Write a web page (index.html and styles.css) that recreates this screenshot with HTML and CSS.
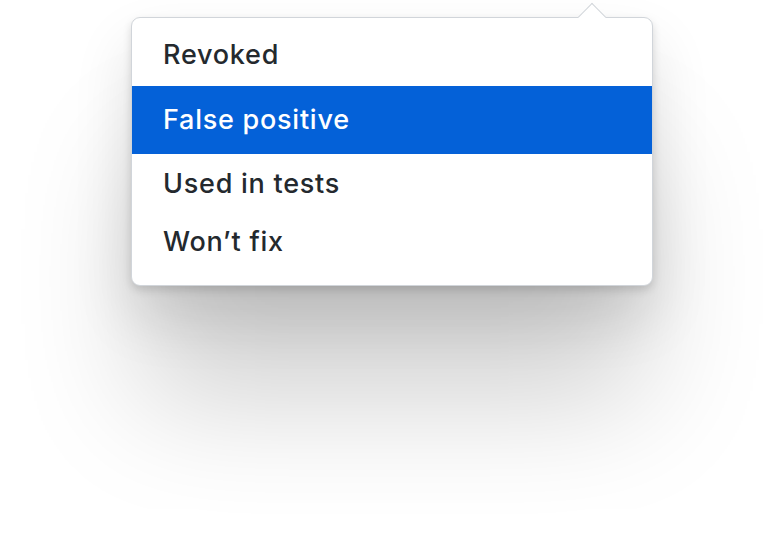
FILE: index.html
```html
<!DOCTYPE html>
<html>
<head>
<meta charset="utf-8">
<link rel="stylesheet" href="styles.css">
</head>
<body>
<div class="stage">
  <div class="menu">
    <span class="caret"></span>
    <div class="item">Revoked</div>
    <div class="item active">False positive</div>
    <div class="item">Used in tests</div>
    <div class="item">Won’t fix</div>
  </div>
</div>
</body>
</html>
```
FILE: styles.css
```css
html, body {
  margin: 0;
  background: #ffffff;
}
.stage {
  width: 784px;
  height: 557px;
  padding: 17px 0 0 131px;
  box-sizing: border-box;
  overflow: hidden;
}
.menu {
  position: relative;
  width: 522px;
  box-sizing: border-box;
  background: #fff;
  border: 1px solid #d1d5da;
  border-radius: 9px;
  padding: 8px 0 14px;
  box-shadow: 0 4px 8px rgba(0,0,0,0.14), 0 30px 60px rgba(0,0,0,0.12), 0 125px 125px -10px rgba(0,0,0,0.18);
  font-family: Inter, "Noto Sans", sans-serif;
  font-weight: 500;
  font-size: 27px;
  letter-spacing: 0.75px;
  color: #24292e;
}
.caret {
  position: absolute;
  left: 450px;
  top: -11px;
  width: 20px;
  height: 20px;
  box-sizing: border-box;
  background: #fff;
  border-top: 1px solid #d1d5da;
  border-left: 1px solid #d1d5da;
  transform: rotate(45deg);
}
.item {
  position: relative;
  height: 58px;
  line-height: 58px;
  padding-left: 31px;
}
.item.active {
  height: 68px;
  line-height: 68px;
  margin: 2px 0 1px;
  background: #0461d8;
  color: #fff;
}
```
